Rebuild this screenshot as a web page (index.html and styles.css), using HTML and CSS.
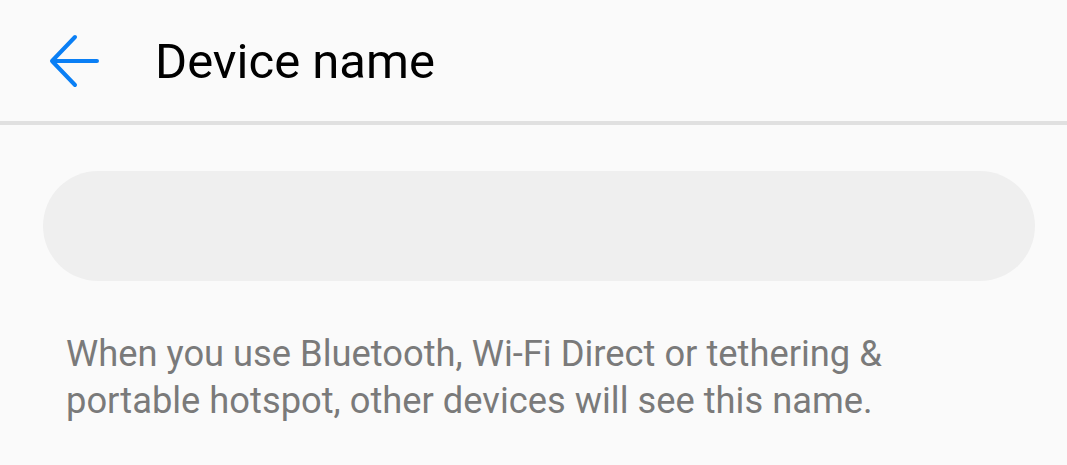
FILE: index.html
```html
<!DOCTYPE html>
<html lang="en">
  <head>
    <link rel="stylesheet" href="styles.css">
  </head>
  <body>
    <header class="top-bar">
      <a class="back" href="#">
        <svg width="56" height="56" viewBox="0 0 56 56">
          <path d="M49 28H4M27 4L4 28L27 52" fill="none" stroke="#0a7ff5" stroke-width="4" stroke-linecap="round" stroke-linejoin="round" />
        </svg>
      </a>
      <h1 class="title">Device name</h1>
    </header>

    <section class="content">
      <div class="name-field"></div>
      <p class="hint">
        When you use Bluetooth, Wi-Fi Direct or tethering &amp;<br />
        portable hotspot, other devices will see this name.
      </p>
    </section>
  </body>
</html>
```

FILE: styles.css
```css
body {
  margin: 0;
  background-color: #fafafa;
  font-family: Roboto, "Noto Sans", sans-serif;
  overflow: hidden;
}

a {
  text-decoration: none;
  color: inherit;
}

h1,
p {
  margin: 0;
}

.top-bar {
  display: flex;
  align-items: center;
  height: 125px;
  padding-left: 48px;
  border-bottom: 4px solid #e0e0e0;
  box-sizing: border-box;
}

.back {
  display: flex;
  width: 56px;
  height: 56px;
  margin-right: 51px;
}

.title {
  font-size: 49px;
  font-weight: 400;
  color: #000;
  margin-top: 2px;
}

.content {
  padding: 46px 32px 0 43px;
}

.name-field {
  height: 110px;
  border-radius: 55px;
  background-color: #efefef;
}

.hint {
  margin-top: 49px;
  padding-left: 23px;
  font-size: 36.3px;
  line-height: 47px;
  color: #7a7a7a;
}
```
